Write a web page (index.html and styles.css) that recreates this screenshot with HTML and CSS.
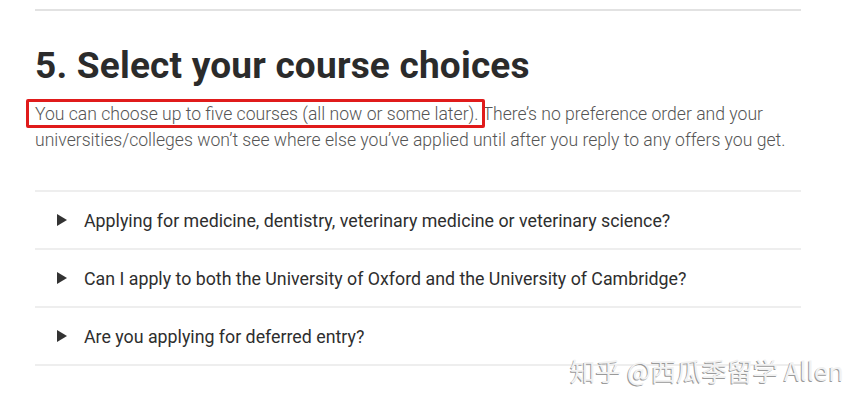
FILE: index.html
```html
<!DOCTYPE html>
<html>
<head>
<meta charset="utf-8">
<link rel="stylesheet" href="styles.css">
</head>
<body>
<div class="page">
  <section class="section">
    <h2 class="title">5. Select your course choices</h2>
    <p class="intro"><span class="mark">You can choose up to five courses (all now or some later).</span> There’s no preference order and your universities/colleges won’t see where else you’ve applied until after you reply to any offers you get.</p>
    <ul class="faq">
      <li class="faq-item"><span class="arrow"></span><span class="q">Applying for medicine, dentistry, veterinary medicine or veterinary science?</span></li>
      <li class="faq-item"><span class="arrow"></span><span class="q">Can I apply to both the University of Oxford and the University of Cambridge?</span></li>
      <li class="faq-item"><span class="arrow"></span><span class="q">Are you applying for deferred entry?</span></li>
    </ul>
  </section>
  <div class="watermark">知乎 @西瓜季留学 Allen</div>
</div>
</body>
</html>
```

FILE: styles.css
```css
html, body {
  margin: 0;
  padding: 0;
  background: #ffffff;
}
body {
  font-family: Roboto, "Liberation Sans", sans-serif;
  width: 865px;
  height: 406px;
  overflow: hidden;
}
.page {
  position: relative;
  width: 865px;
  height: 406px;
}
.section {
  margin: 0 64px 0 35px;
  padding-top: 9px;
}
.section::before {
  content: "";
  display: block;
  height: 2px;
  background: #e2e2e2;
}
.title {
  margin: 31px 0 0 0;
  font-size: 37px;
  font-weight: 700;
  color: #2b2b2b;
  line-height: 48px;
  letter-spacing: 0.2px;
}
.intro {
  margin: 11px 0 0 0;
  font-size: 17.6px;
  font-weight: 300;
  color: #555555;
  line-height: 26px;
}
.mark {
  position: relative;
}
.mark::after {
  content: "";
  position: absolute;
  left: -9px;
  right: -6px;
  top: -5px;
  bottom: -4px;
  border: 3px solid #e01b1b;
  border-radius: 2px;
}
.faq {
  list-style: none;
  margin: 37px 0 0 0;
  padding: 0;
  border-top: 2px solid #eeeeee;
}
.faq-item {
  display: flex;
  align-items: center;
  height: 56px;
  border-bottom: 2px solid #eeeeee;
  padding-left: 22px;
}
.arrow {
  width: 0;
  height: 0;
  border-top: 6px solid transparent;
  border-bottom: 6px solid transparent;
  border-left: 10px solid #333333;
  margin-right: 17px;
}
.q {
  font-size: 17.8px;
  font-weight: 400;
  color: #2e2e2e;
}
.watermark {
  position: absolute;
  left: 570px;
  top: 351px;
  font-family: "Noto Sans CJK SC", sans-serif;
  font-size: 25.5px;
  color: #f2f2f2;
  text-shadow: -1px 1px 0 #9a9a9a;
  white-space: nowrap;
}
```
